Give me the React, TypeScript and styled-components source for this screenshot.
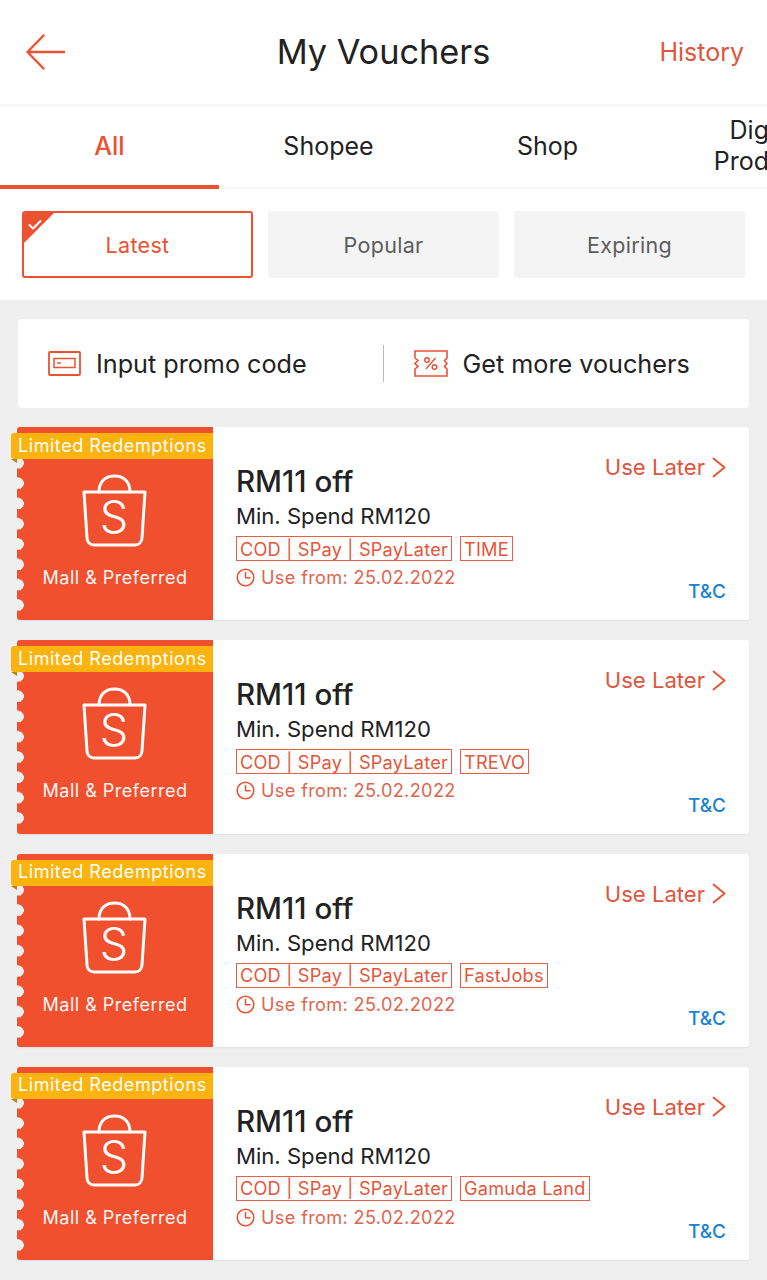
import * as React from 'react';
import styled, { createGlobalStyle } from 'styled-components';

const ORANGE = '#ea5232';
const PANEL = '#f1502e';
const PAGE_BG = '#efefef';

const vouchers = ['TIME', 'TREVO', 'FastJobs', 'Gamuda Land'];
const tabs = ['All', 'Shopee', 'Shop', 'Digital Products'];
const filters = ['Latest', 'Popular', 'Expiring'];

const BackArrow = () => (
  <svg width="40" height="36" viewBox="0 0 40 36" fill="none" stroke={ORANGE} strokeWidth="2.4" strokeLinecap="round" strokeLinejoin="round">
    <path d="M38 18H1.500M17.500 1.500L1.500 18l16 16.500" />
  </svg>
);

const CheckMark = () => (
  <svg width="14" height="11" viewBox="0 0 14 11" fill="none" stroke="#fff" strokeWidth="2" strokeLinecap="round" strokeLinejoin="round">
    <path d="M1.500 6l3.500 3.500L12.500 2" />
  </svg>
);

const PromoIcon = () => (
  <svg width="33" height="25" viewBox="0 0 33 25" fill="none" stroke={ORANGE}>
    <rect x="1" y="1" width="31" height="23" rx="1" strokeWidth="1.8" />
    <rect x="6" y="7.500" width="21" height="9" strokeWidth="1.500" />
    <path d="M9 12h4" strokeWidth="1.500" />
  </svg>
);

const TicketIcon = () => (
  <svg width="34" height="27" viewBox="0 0 34 27" fill="none" stroke={ORANGE} strokeWidth="1.600">
    <path d="M1 1h32v7l-2.500 2.500L33 13.500l-2.500 3L33 19v7H1v-7l3-2.500L1 13.500l3-3L1 8z" />
    <path d="M12 19L21.500 8" strokeWidth="1.400" />
    <circle cx="13" cy="10" r="2.300" strokeWidth="1.400" />
    <circle cx="20.500" cy="17" r="2.300" strokeWidth="1.400" />
  </svg>
);

const ClockIcon = () => (
  <svg width="19" height="19" viewBox="0 0 19 19" fill="none" stroke={ORANGE} strokeWidth="1.500" strokeLinecap="round" strokeLinejoin="round">
    <circle cx="9.500" cy="9.500" r="8.300" />
    <path d="M9.500 4.500v5.200h4.600" />
  </svg>
);

const Chevron = () => (
  <svg width="14" height="21" viewBox="0 0 14 21" fill="none" stroke={ORANGE} strokeWidth="1.900" strokeLinecap="round" strokeLinejoin="round">
    <path d="M1.500 1.500l11 9-11 9" />
  </svg>
);

const ShopeeBag = () => (
  <svg width="66" height="74" viewBox="0 0 66 74" fill="none" stroke="#fff" strokeWidth="3" strokeLinecap="round" strokeLinejoin="round">
    <path d="M17 18C17 7 24 2 32.500 2S48 7 48 18" />
    <path d="M2 18h61l-3 46c-.3 4-3 7-7 7H12c-4 0-7-3-7-7z" />
    <text x="32" y="59" textAnchor="middle" fill="#fff" stroke="none" fontFamily="Inter, sans-serif" fontWeight="300" fontSize="45">S</text>
  </svg>
);

export default function App() {
  return (
    <>
      <GlobalStyle />
      <Page>
        <Header>
          <BackButton><BackArrow /></BackButton>
          <Title>My Vouchers</Title>
          <HistoryLink>History</HistoryLink>
        </Header>
        <TabBar>
          {tabs.map((tab, i) => (
            <Tab key={tab} $active={i === 0}>{tab}</Tab>
          ))}
        </TabBar>
        <FilterRow>
          {filters.map((filter, i) => (
            <FilterChip key={filter} $active={i === 0}>
              {i === 0 && <ChipCorner><CheckMark /></ChipCorner>}
              {filter}
            </FilterChip>
          ))}
        </FilterRow>
        <Content>
          <PromoCard>
            <PromoItem>
              <PromoIcon />
              <span>Input promo code</span>
            </PromoItem>
            <PromoItem $divider>
              <TicketIcon />
              <span>Get more vouchers</span>
            </PromoItem>
          </PromoCard>
          {vouchers.map((tag) => (
            <VoucherCard key={tag}>
              <LeftPanel>
                <Notches />
                <Ribbon>Limited Redemptions</Ribbon>
                <ShopeeBag />
                <PanelLabel>Mall &amp; Preferred</PanelLabel>
              </LeftPanel>
              <VoucherBody>
                <Info>
                  <Amount>RM11 off</Amount>
                  <MinSpend>Min. Spend RM120</MinSpend>
                  <TagRow>
                    <Tag>COD | SPay | SPayLater</Tag>
                    <Tag>{tag}</Tag>
                  </TagRow>
                  <DateRow>
                    <ClockIcon />
                    <span>Use from: 25.02.2022</span>
                  </DateRow>
                </Info>
                <Actions>
                  <UseLater>Use Later <Chevron /></UseLater>
                  <Terms>T&amp;C</Terms>
                </Actions>
              </VoucherBody>
            </VoucherCard>
          ))}
        </Content>
      </Page>
    </>
  );
}

const GlobalStyle = createGlobalStyle`
  html, body {
    margin: 0;
    padding: 0;
    background: ${PAGE_BG};
    overflow: hidden;
  }
  * {
    box-sizing: border-box;
  }
`;

const Page = styled.div`
  width: 767px;
  height: 1280px;
  overflow: hidden;
  background: ${PAGE_BG};
  font-family: Inter, "Liberation Sans", sans-serif;
  color: #222;
`;

const Header = styled.header`
  height: 107px;
  padding: 0 23px 1px;
  background: #fff;
  border-bottom: 3px solid #f7f7f7;
  display: grid;
  grid-template-columns: 1fr auto 1fr;
  align-items: center;
`;

const BackButton = styled.div`
  margin-left: 3px;
  display: flex;
  align-items: center;
`;

const Title = styled.h1`
  margin: 0;
  font-size: 34.300px;
  font-weight: 400;
  color: #222;
`;

const HistoryLink = styled.div`
  font-size: 25px;
  text-align: right;
  color: #e0553d;
`;

const TabBar = styled.nav`
  height: 82px;
  display: flex;
  overflow: hidden;
  background: #fff;
`;

const Tab = styled.div<{ $active: boolean }>`
  flex: 0 0 219px;
  height: 82px;
  padding: 0 40px ${(p) => (p.$active ? 0 : 2)}px;
  display: flex;
  align-items: center;
  justify-content: center;
  text-align: center;
  font-size: 25px;
  line-height: 31px;
  font-weight: ${(p) => (p.$active ? 500 : 400)};
  color: ${(p) => (p.$active ? ORANGE : '#222')};
  border-bottom: ${(p) => (p.$active ? `4px solid ${ORANGE}` : '2px solid #f7f7f7')};
`;

const FilterRow = styled.div`
  height: 111px;
  padding: 22px;
  display: flex;
  gap: 15px;
  background: #fff;
`;

const FilterChip = styled.div<{ $active: boolean }>`
  position: relative;
  width: 231px;
  height: 67px;
  display: flex;
  align-items: center;
  justify-content: center;
  font-size: 21.500px;
  letter-spacing: 0.3px;
  border-radius: 3px;
  overflow: hidden;
  background: ${(p) => (p.$active ? '#fff' : '#f4f4f4')};
  color: ${(p) => (p.$active ? ORANGE : '#5c5c5c')};
  border: 2px solid ${(p) => (p.$active ? ORANGE : '#f4f4f4')};
`;

const ChipCorner = styled.div`
  position: absolute;
  top: 0;
  left: 0;
  width: 30px;
  height: 30px;
  padding: 6px 0 0 4px;
  display: flex;
  align-items: flex-start;
  background: ${ORANGE};
  clip-path: polygon(0 0, 100% 0, 0 100%);
`;

const Content = styled.main`
  padding: 19px 18px 0;
  display: flex;
  flex-direction: column;
  gap: 19px;
`;

const PromoCard = styled.section`
  height: 89px;
  display: flex;
  background: #fff;
  border-radius: 4px;
`;

const PromoItem = styled.div<{ $divider?: boolean }>`
  flex: 1;
  display: flex;
  align-items: center;
  gap: 15px;
  padding-left: 30px;
  font-size: 25.200px;
  color: #222;
  position: relative;
  ${(p) =>
    p.$divider &&
    `&::before {
      content: '';
      position: absolute;
      left: -1px;
      top: 26px;
      height: 37px;
      width: 1px;
      background: #b9b9b9;
    }`}
`;

const VoucherCard = styled.article`
  height: 193.330px;
  display: flex;
  background: #fff;
  margin-left: -1px;
  margin-bottom: 1px;
  border-radius: 3px;
  box-shadow: 0 1px 2px rgba(0, 0, 0, 0.06);
`;

const LeftPanel = styled.div`
  position: relative;
  flex: 0 0 196px;
  padding-top: 47px;
  display: flex;
  flex-direction: column;
  align-items: center;
  background: ${PANEL};
  border-radius: 3px 0 0 3px;
`;

const Notches = styled.div`
  position: absolute;
  left: -5px;
  top: 26px;
  width: 12px;
  height: 162px;
  background: radial-gradient(circle at 6px 10px, ${PAGE_BG} 5.600px, transparent 6px) 0 0 / 12px 20.300px repeat-y;
`;

const Ribbon = styled.div`
  position: absolute;
  top: 6px;
  left: -6px;
  width: 202px;
  height: 26px;
  padding: 0 0 2px 7px;
  display: flex;
  align-items: center;
  font-size: 18px;
  letter-spacing: 0.550px;
  white-space: nowrap;
  color: #fff;
  background: #fbb30d;
  border-radius: 3px 0 0 3px;
  &::after {
    content: '';
    position: absolute;
    left: 0;
    top: 26px;
    border-top: 4px solid #b8820a;
    border-left: 6px solid transparent;
  }
`;

const PanelLabel = styled.div`
  margin-top: 19px;
  font-size: 18px;
  letter-spacing: 0.500px;
  color: #fff;
  opacity: 0.95;
`;

const VoucherBody = styled.div`
  flex: 1;
  display: flex;
  justify-content: space-between;
  padding: 0 23px;
`;

const Info = styled.div`
  padding-top: 36px;
  display: flex;
  flex-direction: column;
`;

const Amount = styled.div`
  font-size: 29.500px;
  line-height: 36px;
  font-weight: 500;
  color: #222;
`;

const MinSpend = styled.div`
  font-size: 22.100px;
  line-height: 34px;
  color: #222;
`;

const TagRow = styled.div`
  margin-top: 3px;
  display: flex;
  gap: 8px;
`;

const Tag = styled.span`
  height: 25px;
  padding: 0 3px;
  display: flex;
  align-items: center;
  font-size: 18.200px;
  letter-spacing: 0.200px;
  white-space: nowrap;
  color: #e5563a;
  border: 1px solid #e5604a;
`;

const DateRow = styled.div`
  margin-top: 3px;
  display: flex;
  align-items: center;
  gap: 6px;
  font-size: 18.200px;
  line-height: 27px;
  letter-spacing: 0.320px;
  color: #e0654e;
`;

const Actions = styled.div`
  padding: 26px 0 17px;
  display: flex;
  flex-direction: column;
  align-items: flex-end;
  justify-content: space-between;
`;

const UseLater = styled.div`
  display: flex;
  align-items: center;
  gap: 7px;
  font-size: 22.100px;
  line-height: 28px;
  white-space: nowrap;
  color: #e0553d;
`;

const Terms = styled.div`
  font-size: 19px;
  line-height: 22px;
  font-weight: 500;
  color: #1a82d0;
`;
